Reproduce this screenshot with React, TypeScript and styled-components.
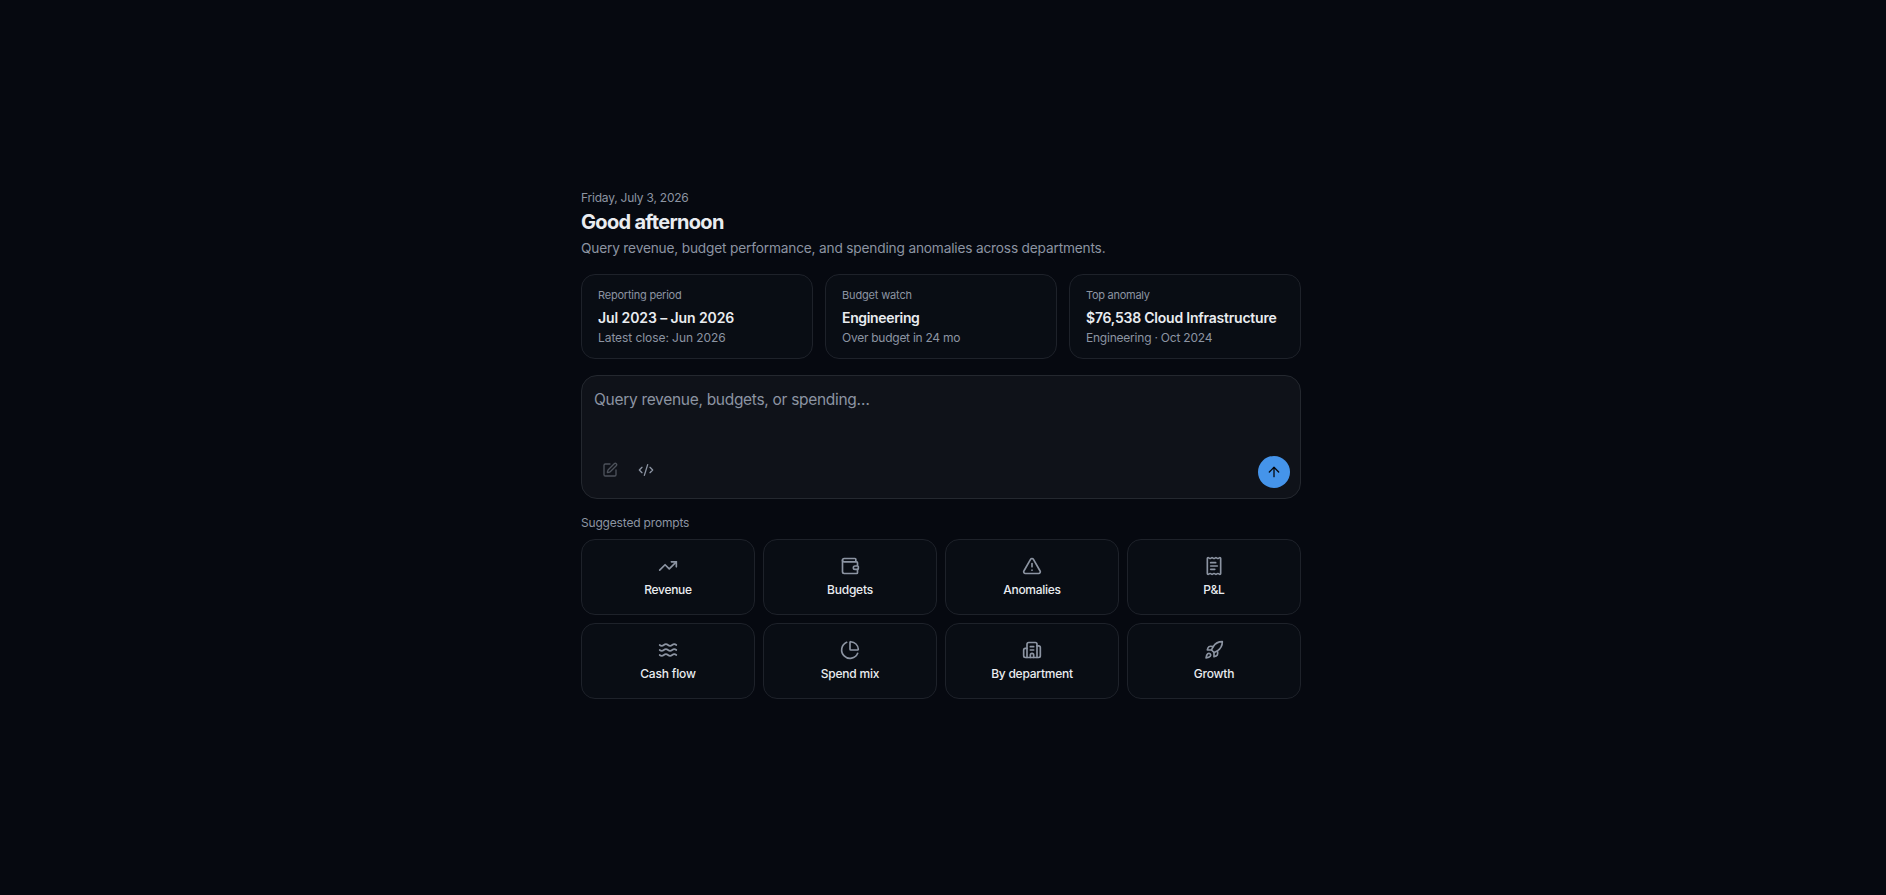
import React from "react";
import styled, { createGlobalStyle } from "styled-components";
import {
  TrendingUp, Wallet, TriangleAlert, ReceiptText, Waves, ChartPie, Building2, Rocket, ArrowUp, SquarePen, CodeXml,
} from "lucide-react";

const GlobalStyle = createGlobalStyle`
  * { box-sizing: border-box; }
  body { margin: 0; background: #060910; }
`;

const Page = styled.main`
  min-height: 895px;
  padding: 189px 4px 0 0;
  display: flex;
  justify-content: center;
  align-items: flex-start;
  background: #060910;
  color: #e9ecf0;
  font-family: Inter, "Liberation Sans", sans-serif;
`;

const Column = styled.div`
  width: 720px;
  display: flex;
  flex-direction: column;
`;

const Text = styled.span<{ $spacing?: number }>`
  display: block;
  white-space: nowrap;
  align-self: flex-start;
  letter-spacing: ${(p) => p.$spacing ?? 0}px;
`;

const DateLine = styled(Text)`
  font-size: 12px;
  line-height: 18px;
  color: #8c94a2;
`;

const Title = styled(Text)`
  margin: 3px 0 0;
  font-size: 20px;
  line-height: 24px;
  font-weight: 650;
`;

const Subtitle = styled(Text)`
  margin-top: 4px;
  font-size: 13.7px;
  line-height: 20px;
  color: #8c94a2;
`;

const StatGrid = styled.section`
  margin-top: 16px;
  display: grid;
  grid-template-columns: repeat(3, 1fr);
  gap: 12px;
`;

const StatCard = styled.article`
  height: 85px;
  padding: 12px 16px;
  display: flex;
  flex-direction: column;
  border: 1px solid #1e222a;
  border-radius: 14px;
  background: #090d14;
`;

const StatLabel = styled(Text)`
  font-size: 11px;
  line-height: 16px;
  color: #8c94a2;
`;

const StatValue = styled(Text)`
  margin-top: 5px;
  font-size: 14px;
  line-height: 20px;
  font-weight: 600;
`;

const StatNote = styled(Text)`
  margin-top: 1px;
  font-size: 12px;
  line-height: 18px;
  color: #8c94a2;
`;

const Composer = styled.section`
  margin-top: 16px;
  height: 124px;
  padding: 12px 10px 10px 12px;
  display: flex;
  flex-direction: column;
  justify-content: space-between;
  border: 1px solid #24282f;
  border-radius: 16px;
  background: #0f1219;
`;

const Placeholder = styled(Text)`
  font-size: 15.5px;
  line-height: 24px;
  color: #8c94a2;
`;

const Toolbar = styled.div`
  display: flex;
  justify-content: space-between;
  align-items: flex-end;
`;

const Tools = styled.div`
  display: flex;
  gap: 4px;
`;

const ToolButton = styled.button<{ $dim?: boolean }>`
  width: 32px;
  height: 36px;
  padding: 0;
  display: grid;
  place-items: center;
  border: 0;
  background: none;
  color: ${(p) => (p.$dim ? "#4d525b" : "#8c94a2")};
`;

const SendButton = styled.button`
  width: 32px;
  height: 32px;
  padding: 0;
  display: grid;
  place-items: center;
  border: 0;
  border-radius: 50%;
  background: #4594ea;
  color: #060910;
`;

const SectionLabel = styled(Text)`
  margin-top: 15px;
  font-size: 12px;
  line-height: 18px;
  color: #8c94a2;
`;

const PromptGrid = styled.section`
  margin-top: 7px;
  display: grid;
  grid-template-columns: repeat(4, 1fr);
  gap: 8px;
`;

const PromptButton = styled.button`
  height: 76px;
  padding: 0 0 1px;
  display: flex;
  flex-direction: column;
  align-items: center;
  justify-content: center;
  gap: 6px;
  border: 1px solid #1e222a;
  border-radius: 14px;
  background: #090d14;
  color: #8c94a2;
  font-family: inherit;
`;

const PromptLabel = styled(Text)`
  align-self: center;
  font-size: 12px;
  line-height: 16px;
  font-weight: 500;
  color: #e9ecf0;
`;

const stats = [
  { label: "Reporting period", value: "Jul 2023 – Jun 2026", note: "Latest close: Jun 2026", spacing: [-0.22, -0.09, -0.07] },
  { label: "Budget watch", value: "Engineering", note: "Over budget in 24 mo", spacing: [-0.15, -0.34, -0.26] },
  { label: "Top anomaly", value: "$76,538 Cloud Infrastructure", note: "Engineering · Oct 2024", spacing: [-0.27, -0.22, -0.22] },
];

const prompts = [
  { label: "Revenue", Icon: TrendingUp, spacing: -0.3 },
  { label: "Budgets", Icon: Wallet, spacing: -0.2 },
  { label: "Anomalies", Icon: TriangleAlert, spacing: -0.27 },
  { label: "P&L", Icon: ReceiptText, spacing: -0.1 },
  { label: "Cash flow", Icon: Waves, spacing: -0.17 },
  { label: "Spend mix", Icon: ChartPie, spacing: -0.23 },
  { label: "By department", Icon: Building2, spacing: -0.23 },
  { label: "Growth", Icon: Rocket, spacing: -0.2 },
];

export default function App() {
  return (
    <Page>
      <GlobalStyle />
      <Column>
        <DateLine $spacing={-0.22}>Friday, July 3, 2026</DateLine>
        <Title as="h1" $spacing={-0.7}>Good afternoon</Title>
        <Subtitle $spacing={-0.18}>Query revenue, budget performance, and spending anomalies across departments.</Subtitle>
        <StatGrid>
          {stats.map((s) => (
            <StatCard key={s.label}>
              <StatLabel $spacing={s.spacing[0]}>{s.label}</StatLabel>
              <StatValue $spacing={s.spacing[1]}>{s.value}</StatValue>
              <StatNote $spacing={s.spacing[2]}>{s.note}</StatNote>
            </StatCard>
          ))}
        </StatGrid>
        <Composer>
          <Placeholder $spacing={-0.3}>Query revenue, budgets, or spending…</Placeholder>
          <Toolbar>
            <Tools>
              <ToolButton $dim aria-label="Compose"><SquarePen size={16} strokeWidth={2} /></ToolButton>
              <ToolButton aria-label="Code"><CodeXml size={16} strokeWidth={2} /></ToolButton>
            </Tools>
            <SendButton aria-label="Send"><ArrowUp size={16} /></SendButton>
          </Toolbar>
        </Composer>
        <SectionLabel $spacing={-0.18}>Suggested prompts</SectionLabel>
        <PromptGrid>
          {prompts.map(({ label, Icon, spacing }) => (
            <PromptButton key={label}>
              <Icon size={20} strokeWidth={2} />
              <PromptLabel $spacing={spacing}>{label}</PromptLabel>
            </PromptButton>
          ))}
        </PromptGrid>
      </Column>
    </Page>
  );
}
